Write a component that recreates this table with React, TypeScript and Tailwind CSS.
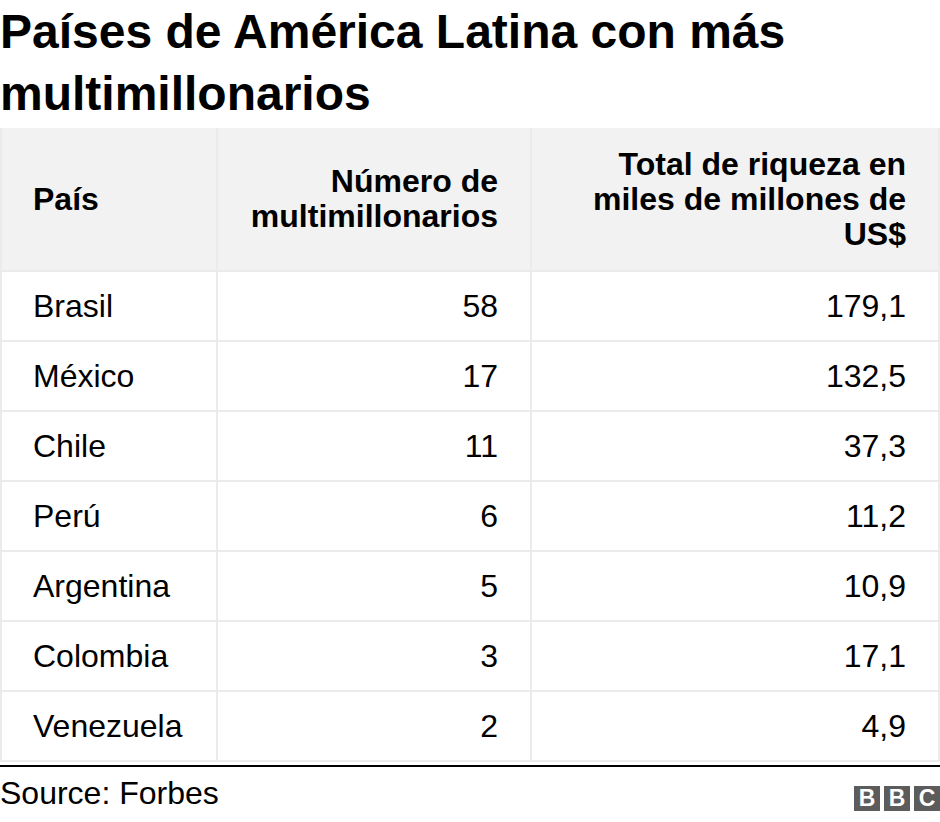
const rows: [string, string, string][] = [
  ["Brasil", "58", "179,1"],
  ["México", "17", "132,5"],
  ["Chile", "11", "37,3"],
  ["Perú", "6", "11,2"],
  ["Argentina", "5", "10,9"],
  ["Colombia", "3", "17,1"],
  ["Venezuela", "2", "4,9"],
];

export default function App() {
  return (
    <div className="w-[940px] h-[822px] bg-white text-black font-['Liberation_Sans',Arial,Helvetica,sans-serif]">
      <h1 className="pt-[1px] text-[48px] leading-[62px] font-bold">
        Países de América Latina con más multimillonarios
      </h1>

      <div className="mt-[3px] border-l-2 border-[#ebebeb] grid grid-cols-[216px_314px_1fr] text-[32px]">
        {/* cabecera */}
        <div className="h-[144px] flex items-center pl-[31px] bg-[#f2f2f2] border-r-2 border-b-2 border-[#ebebeb] font-bold leading-[35px]">
          País
        </div>
        <div className="h-[144px] flex items-center justify-end text-right pr-8 bg-[#f2f2f2] border-r-2 border-b-2 border-[#ebebeb] font-bold leading-[35px] whitespace-nowrap">
          <span>
            Número de
            <br />
            multimillonarios
          </span>
        </div>
        <div className="h-[144px] flex items-center justify-end text-right pr-8 bg-[#f2f2f2] border-r-2 border-b-2 border-[#ebebeb] font-bold leading-[35px] whitespace-nowrap">
          <span>
            Total de riqueza en
            <br />
            miles de millones de
            <br />
            US$
          </span>
        </div>

        {rows.map(([pais, num, total]) => (
          <div key={pais} className="contents">
            <div className="h-[70px] flex items-center pl-[31px] border-r-2 border-b-2 border-[#ebebeb]">
              {pais}
            </div>
            <div className="h-[70px] flex items-center justify-end pr-8 border-r-2 border-b-2 border-[#ebebeb]">
              {num}
            </div>
            <div className="h-[70px] flex items-center justify-end pr-8 border-r-2 border-b-2 border-[#ebebeb]">
              {total}
            </div>
          </div>
        ))}
      </div>

      <div className="mt-[3px] h-[2px] bg-black" />

      <div className="mt-[8px] flex justify-between items-start">
        <span className="text-[32px] leading-[37px]">Source: Forbes</span>
        <div className="mt-[11px] flex gap-[4px]">
          {["B", "B", "C"].map((l, i) => (
            <div
              key={i}
              className="w-[26px] h-[25px] bg-[#5c5c5c] text-white flex items-center justify-center text-[23px] leading-none font-bold"
            >
              {l}
            </div>
          ))}
        </div>
      </div>
    </div>
  );
}
